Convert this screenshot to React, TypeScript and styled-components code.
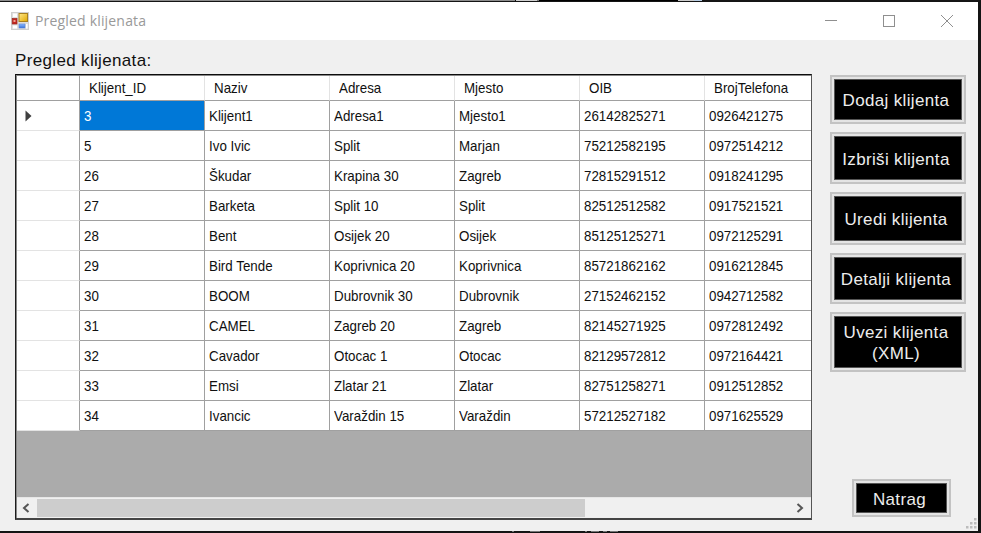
import React from 'react';
import styled, { createGlobalStyle } from 'styled-components';

const GlobalStyle = createGlobalStyle`
  * { box-sizing: border-box; }
  html, body { margin: 0; padding: 0; overflow: hidden; background: #141414; }
`;

const Desktop = styled.div`
  display: flex;
  flex-direction: column;
  width: 981px;
  height: 533px;
  background: #141414;
  font-family: 'Liberation Sans', Arial, sans-serif;
  color: #101010;
`;

const Backdrop = styled.div`
  flex: none;
  display: flex;
  height: 2px;
`;

const Strip = styled.div<{ $w: number; $c: string }>`
  width: ${p => p.$w}px;
  height: 1px;
  background: ${p => p.$c};
`;

const BottomEdge = styled.div`
  height: 2px;
  background: #141414;
  svg { display: block; margin-left: 512px; }
`;

const Window = styled.div`
  display: flex;
  flex-direction: column;
  width: 978px;
  height: 529px;
  background: #f0f0f0;
`;

const TitleBar = styled.header`
  flex: none;
  display: flex;
  align-items: center;
  height: 38px;
  padding-left: 11px;
  background: #fff;
`;

const Title = styled.span`
  flex: 1;
  margin: 0 0 1px 6px;
  font: 400 14px/20px 'Open Sans', 'Noto Sans', sans-serif;
  letter-spacing: 0.18px;
  color: #999;
`;

const Controls = styled.div`
  display: flex;
  gap: 34px;
  padding-right: 19px;
  svg { display: block; width: 24px; height: 14px; }
`;

const Body = styled.main`
  flex: 1;
  display: flex;
  min-height: 0;
`;

const ListPane = styled.section`
  width: 797px;
  margin-left: 15px;
`;

const Label = styled.div`
  height: 34px;
  padding-top: 10px;
  font-size: 17px;
  line-height: 21px;
  letter-spacing: 0.34px;
  white-space: nowrap;
`;

const GridBox = styled.div`
  display: flex;
  flex-direction: column;
  height: 446px;
  border: solid #1c1c1c;
  border-width: 1px 1px 2px 1px;
  border-color: #0c0c0c #555 #444 #1c1c1c;
  box-shadow: inset 1px 1px 0 #888;
  padding: 1px 0 0 1px;
  background: #ababab;
`;

const Row = styled.div<{ $head?: boolean }>`
  flex: none;
  display: grid;
  grid-template-columns: 63px repeat(5, 125px) 107px;
  height: ${p => (p.$head ? 25 : 30)}px;
  width: 794px;
  overflow: hidden;
`;

const RowHeader = styled.div<{ $head?: boolean }>`
  display: flex;
  align-items: center;
  padding-left: 8px;
  background: #fff;
  border-right: 1px solid #a0a0a0;
  border-bottom: 1px solid ${p => (p.$head ? '#a0a0a0' : '#e3e3e3')};
`;

const Cell = styled.div<{ $head?: boolean; $selected?: boolean }>`
  display: flex;
  align-items: center;
  padding: ${p => (p.$head ? '0 0 1px 9px' : '1px 0 0 4px')};
  background: ${p => (p.$selected ? '#0078d7' : '#fff')};
  color: ${p => (p.$selected ? '#fff' : '#101010')};
  border-right: 1px solid ${p => (p.$head ? '#e3e3e3' : '#a0a0a0')};
  border-bottom: 1px solid #a0a0a0;
  overflow: hidden;
`;

const CellText = styled.span`
  flex: none;
  font-size: 15px;
  line-height: 20px;
  white-space: nowrap;
  transform: scaleX(0.89);
  transform-origin: 0 50%;
`;

const ScrollBar = styled.div`
  flex: none;
  display: flex;
  align-items: center;
  height: 21px;
  margin-top: auto;
  background: #f0f0f0;
  border-top: 1px solid #e6e6e6;
  svg { display: block; flex: none; }
`;

const Thumb = styled.div`
  width: 548px;
  height: 18px;
  margin: 0 auto 0 -1px;
  background: #cdcdcd;
`;

const Actions = styled.aside`
  display: flex;
  flex-direction: column;
  width: 136px;
  margin-left: 18px;
  padding: 35px 0 14px;
`;

const ActionButton = styled.button<{ $h: number }>`
  flex: none;
  width: 136px;
  height: ${p => p.$h}px;
  margin: 0 0 8px;
  padding: 2px 4px 0 0;
  border: 2px solid #c3c3c3;
  background: #000;
  box-shadow: inset 0 0 0 2px #e4e4e4, inset 0 0 0 3px #555;
  color: #ededed;
  font: 17px/21px 'Liberation Sans', Arial, sans-serif;
  letter-spacing: 0.34px;
  white-space: pre;
`;

const BackButton = styled(ActionButton)`
  width: 99px;
  margin: auto 15px 0 auto;
`;

const Grip = styled.div`
  align-self: flex-end;
  svg { display: block; }
`;

const columns = ['Klijent_ID', 'Naziv', 'Adresa', 'Mjesto', 'OIB', 'BrojTelefona'];

const clients = [
  ['3', 'Klijent1', 'Adresa1', 'Mjesto1', '26142825271', '0926421275'],
  ['5', 'Ivo Ivic', 'Split', 'Marjan', '75212582195', '0972514212'],
  ['26', 'Škudar', 'Krapina 30', 'Zagreb', '72815291512', '0918241295'],
  ['27', 'Barketa', 'Split 10', 'Split', '82512512582', '0917521521'],
  ['28', 'Bent', 'Osijek 20', 'Osijek', '85125125271', '0972125291'],
  ['29', 'Bird Tende', 'Koprivnica 20', 'Koprivnica', '85721862162', '0916212845'],
  ['30', 'BOOM', 'Dubrovnik 30', 'Dubrovnik', '27152462152', '0942712582'],
  ['31', 'CAMEL', 'Zagreb 20', 'Zagreb', '82145271925', '0972812492'],
  ['32', 'Cavador', 'Otocac 1', 'Otocac', '82129572812', '0972164421'],
  ['33', 'Emsi', 'Zlatar 21', 'Zlatar', '82751258271', '0912512852'],
  ['34', 'Ivancic', 'Varaždin 15', 'Varaždin', '57212527182', '0971625529'],
];

const actions = [
  { label: 'Dodaj klijenta', height: 49 },
  { label: 'Izbriši klijenta', height: 52 },
  { label: 'Uredi klijenta', height: 53 },
  { label: 'Detalji klijenta', height: 51 },
  { label: 'Uvezi klijenta\n(XML)', height: 60 },
];

const FormIcon = () => (
  <svg width="18" height="18" viewBox="0 0 18 18">
    <defs>
      <linearGradient id="gold" x1="0" y1="0" x2="1" y2="1">
        <stop offset="0" stopColor="#ffe88a" />
        <stop offset="1" stopColor="#e0a800" />
      </linearGradient>
      <linearGradient id="blue" x1="0" y1="0" x2="0" y2="1">
        <stop offset="0" stopColor="#8dbbff" />
        <stop offset="1" stopColor="#3670dc" />
      </linearGradient>
    </defs>
    <rect x="0.5" y="0.5" width="17" height="17" fill="#dedede" stroke="#cfcfcf" />
    <path d="M2 1.500h4v3.500H2zM2 13.500h4v3H2zM15 12h1.500v4.500H15z" fill="#fff" />
    <rect x="1.200" y="6.500" width="4.800" height="5.500" fill="#c3261f" stroke="#9b2722" strokeWidth=".7" />
    <rect x="2.500" y="8" width="2" height="2" fill="#f0a092" />
    <rect x="8" y="1.500" width="8.500" height="8" fill="url(#gold)" stroke="#a78020" />
    <rect x="8" y="12" width="6" height="4" fill="url(#blue)" stroke="#5a86d6" strokeWidth=".6" />
  </svg>
);

const gripDots = [[8, 0], [4, 4], [8, 4], [0, 8], [4, 8], [8, 8]];

export default function App() {
  return (
    <Desktop>
      <GlobalStyle />
      <Backdrop>
        <Strip $w={515} $c="#8c8c8c" />
        <Strip $w={1} $c="#111" />
        <Strip $w={21} $c="#d0d0d0" />
        <Strip $w={2} $c="#777" />
        <Strip $w={139} $c="#000" />
        <Strip $w={16} $c="#ccc" />
        <Strip $w={8} $c="#b7cde4" />
        <Strip $w={279} $c="#161616" />
      </Backdrop>
      <Window>
        <TitleBar>
          <FormIcon />
          <Title>Pregled klijenata</Title>
          <Controls>
            <svg viewBox="0 0 24 14" stroke="#8f8f8f" fill="none"><path d="M6 6.500h12" /></svg>
            <svg viewBox="0 0 24 14" stroke="#8f8f8f" fill="none"><rect x="6.500" y="1.500" width="11" height="11" /></svg>
            <svg viewBox="0 0 24 14" stroke="#8f8f8f" fill="none"><path d="M6 1l12 12M18 1L6 13" /></svg>
          </Controls>
        </TitleBar>
        <Body>
          <ListPane>
            <Label>Pregled klijenata:</Label>
            <GridBox>
              <Row $head>
                <RowHeader $head />
                {columns.map(name => (
                  <Cell key={name} $head><CellText>{name}</CellText></Cell>
                ))}
              </Row>
              {clients.map((client, r) => (
                <Row key={client[0]}>
                  <RowHeader>
                    {r === 0 && (
                      <svg width="8" height="12"><path d="M0.500 0.500L6.500 6L0.500 11.500z" fill="#404040" /></svg>
                    )}
                  </RowHeader>
                  {client.map((value, c) => (
                    <Cell key={c} $selected={r === 0 && c === 0}><CellText>{value}</CellText></Cell>
                  ))}
                </Row>
              ))}
              <ScrollBar>
                <svg width="21" height="20"><path d="M11.500 6L7 10l4.500 4" stroke="#555" strokeWidth="2" fill="none" /></svg>
                <Thumb />
                <svg width="21" height="20"><path d="M7.500 6L12 10l-4.500 4" stroke="#555" strokeWidth="2" fill="none" /></svg>
              </ScrollBar>
            </GridBox>
          </ListPane>
          <Actions>
            {actions.map(a => (
              <ActionButton key={a.label} $h={a.height}>{a.label}</ActionButton>
            ))}
            <BackButton $h={38}>Natrag</BackButton>
          </Actions>
          <Grip>
            <svg width="12" height="13">
              {gripDots.map(([x, y]) => (
                <rect key={`${x}-${y}`} x={x} y={y} width="2.500" height="2.500" fill="#bcbcbc" />
              ))}
            </svg>
          </Grip>
        </Body>
      </Window>
      <BottomEdge>
        <svg width="110" height="2">
          <path d="M0 .5h2M18 .5h10M73 .5h2M79 .5h8M91 .5h4M98 .5h8" stroke="#777" />
        </svg>
      </BottomEdge>
    </Desktop>
  );
}
